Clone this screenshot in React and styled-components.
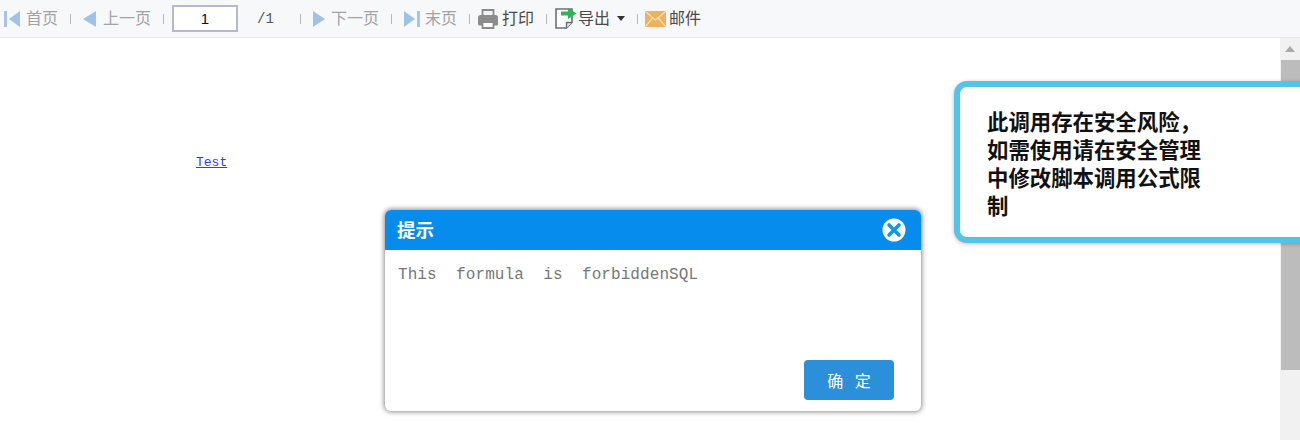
import React from "react";
import styled, { createGlobalStyle } from "styled-components";

const GlobalStyle = createGlobalStyle`
  html, body {
    margin: 0;
    padding: 0;
    background: #fff;
  }
`;

const cjk = `"Noto Sans CJK SC", "Noto Sans", sans-serif`;
const mono = `"Liberation Mono", "DejaVu Sans Mono", monospace`;

const App = () => {
  return (
    <Page>
      <GlobalStyle />
      <Toolbar>
        <Tool $gap={6}>
          <FirstIcon />
          <Label $off>首页</Label>
        </Tool>
        <Sep />
        <Tool $gap={7}>
          <PrevIcon />
          <Label $off>上一页</Label>
        </Tool>
        <Sep $right={8} />
        <PageInput readOnly value="1" />
        <PageCount>/1</PageCount>
        <Sep />
        <Tool $gap={6}>
          <NextIcon />
          <Label $off>下一页</Label>
        </Tool>
        <Sep />
        <Tool $gap={5}>
          <LastIcon />
          <Label $off>末页</Label>
        </Tool>
        <Sep $right={8} />
        <Tool $gap={4}>
          <PrintIcon />
          <Label>打印</Label>
        </Tool>
        <Sep $right={8} />
        <Tool $gap={1}>
          <ExportIcon />
          <Label>导出</Label>
          <Caret />
        </Tool>
        <Sep $right={7} />
        <Tool $gap={3}>
          <MailIcon />
          <Label>邮件</Label>
        </Tool>
      </Toolbar>

      <Content>
        <Report>
          <TestLink href="#">Test</TestLink>
        </Report>
        <Scrollbar>
          <ScrollUp>
            <svg width="12" height="8" viewBox="0 0 12 8">
              <path d="M6 1l5 6H1z" fill="#a9a9a9" />
            </svg>
          </ScrollUp>
          <ScrollThumb />
        </Scrollbar>
      </Content>

      <Callout>
        <CalloutText>此调用存在安全风险，如需使用请在安全管理中修改脚本调用公式限制</CalloutText>
      </Callout>

      <Dialog>
        <DialogHeader>
          <DialogTitle>提示</DialogTitle>
          <CloseIcon />
        </DialogHeader>
        <DialogBody>This  formula  is  forbiddenSQL</DialogBody>
        <DialogFooter>
          <OkButton>确 定</OkButton>
        </DialogFooter>
      </Dialog>
    </Page>
  );
};

const FirstIcon = () => (
  <svg width="16" height="16" viewBox="0 0 16 16">
    <rect x="0" y="0" width="3" height="16" fill="#a6c6e6" />
    <path d="M16 0v16L5 8z" fill="#9fc2e6" />
  </svg>
);

const PrevIcon = () => (
  <svg width="13" height="16" viewBox="0 0 13 16">
    <path d="M13 0v16L0 8z" fill="#9fc2e6" />
  </svg>
);

const NextIcon = () => (
  <svg width="12" height="16" viewBox="0 0 12 16">
    <path d="M0 0v16l12-8z" fill="#9fc2e6" />
  </svg>
);

const LastIcon = () => (
  <svg width="16" height="16" viewBox="0 0 16 16">
    <path d="M0 0v16l11-8z" fill="#9fc2e6" />
    <rect x="13" y="0" width="3" height="16" fill="#a6c6e6" />
  </svg>
);

const PrintIcon = () => (
  <svg width="20" height="20" viewBox="0 0 20 20">
    <path d="M4.500 1h11v6h-11z" fill="#f4f4f4" stroke="#8a8a8a" strokeWidth="1.800" />
    <path
      d="M2.500 6h15A2.500 2.500 0 0 1 20 8.500V15a1.500 1.500 0 0 1-1.500 1.500H1.500A1.500 1.500 0 0 1 0 15V8.500A2.500 2.500 0 0 1 2.500 6z"
      fill="#8c8c8c"
    />
    <path d="M4.500 13h11v6h-11z" fill="#fff" stroke="#8a8a8a" strokeWidth="1.800" />
  </svg>
);

const ExportIcon = () => (
  <svg width="22" height="21" viewBox="0 0 22 21">
    <path
      d="M1 1h16v13.500L11.500 20H1z"
      fill="#fff"
      stroke="#6f6f6f"
      strokeWidth="1.600"
    />
    <path d="M11.500 20v-5.500H17" fill="#e4e4e4" stroke="#6f6f6f" strokeWidth="1.400" />
    <path d="M6 3.500h7V0l8.500 5.500L13 11V7.500H6z" fill="#2fb457" />
  </svg>
);

const Caret = () => (
  <CaretBox>
    <svg width="8" height="5" viewBox="0 0 8 5">
      <path d="M0 0h8L4 5z" fill="#333" />
    </svg>
  </CaretBox>
);

const MailIcon = () => (
  <svg width="21" height="16" viewBox="0 0 21 16">
    <rect x="0" y="0" width="21" height="16" rx="1.500" fill="#eeb25f" />
    <path d="M1 1l9.500 8L20 1M1 15l6.500-8M20 15l-6.500-8" fill="none" stroke="#fae0b4" strokeWidth="1.200" />
  </svg>
);

const CloseIcon = () => (
  <svg width="24" height="24" viewBox="0 0 24 24">
    <circle cx="12" cy="12" r="11.500" fill="#fff" />
    <path d="M7 7l10 10M17 7L7 17" stroke="#0b9ae8" strokeWidth="3.600" strokeLinecap="round" />
  </svg>
);

const Page = styled.div`
  position: relative;
  display: flex;
  flex-direction: column;
  width: 1300px;
  height: 440px;
  overflow: hidden;
  background: #fff;
`;

const Toolbar = styled.div`
  display: flex;
  align-items: center;
  flex: none;
  height: 37px;
  padding-left: 4px;
  box-sizing: content-box;
  background: #f7f8fa;
  border-bottom: 1px solid #e9e9ee;
`;

const Tool = styled.div`
  display: flex;
  align-items: center;
  gap: ${(p) => p.$gap}px;
`;

const Label = styled.span`
  margin-top: -3px;
  font-family: ${cjk};
  font-size: 16px;
  line-height: 22px;
  color: ${(p) => (p.$off ? "#a3a3a3" : "#4a4a4a")};
`;

const Sep = styled.i`
  flex: none;
  width: 1px;
  height: 10px;
  margin: 0 ${(p) => p.$right ?? 12}px 0 12px;
  background: #b8b8b8;
`;

const PageInput = styled.input`
  box-sizing: border-box;
  width: 66px;
  height: 27px;
  margin-top: -1px;
  padding: 0;
  border: 2px solid #b7b7d4;
  background: #fff;
  text-align: center;
  font-family: "Liberation Sans", sans-serif;
  font-size: 15px;
  color: #111;
  outline: none;
`;

const PageCount = styled.span`
  width: 50px;
  padding-left: 19px;
  box-sizing: border-box;
  font-family: ${mono};
  font-size: 14px;
  color: #555;
`;

const CaretBox = styled.span`
  display: flex;
  margin-left: 6px;
`;

const Content = styled.div`
  display: flex;
  flex: 1;
  min-height: 0;
`;

const Report = styled.div`
  flex: 1;
  padding: 114px 0 0 196px;
`;

const TestLink = styled.a`
  font-family: ${mono};
  font-size: 13px;
  line-height: 16px;
  color: #3a3af0;
  text-decoration: underline;
`;

const Scrollbar = styled.div`
  display: flex;
  flex-direction: column;
  flex: none;
  width: 20px;
  background: #f1f1f1;
`;

const ScrollUp = styled.div`
  display: flex;
  align-items: center;
  justify-content: center;
  height: 22px;
`;

const ScrollThumb = styled.div`
  flex: none;
  height: 310px;
  margin-left: 1px;
  background: #bcbcbc;
`;

const Callout = styled.div`
  position: absolute;
  top: 81px;
  left: 954px;
  box-sizing: border-box;
  width: 380px;
  height: 162px;
  padding: 20px 0 0 27px;
  background: #fff;
  border: 6px solid #52c4e8;
  border-radius: 13px;
  box-shadow: 0 1px 4px rgba(0, 0, 0, 0.25);
`;

const CalloutText = styled.div`
  width: 216px;
  font-family: ${cjk};
  font-size: 21.400px;
  font-weight: 700;
  line-height: 28px;
  color: #111;
`;

const Dialog = styled.div`
  position: absolute;
  top: 210px;
  left: 385px;
  display: flex;
  flex-direction: column;
  width: 536px;
  height: 201px;
  background: #fff;
  border-radius: 6px;
  box-shadow: 0 0 5px 1px rgba(0, 0, 0, 0.45);
`;

const DialogHeader = styled.div`
  display: flex;
  align-items: center;
  justify-content: space-between;
  flex: none;
  height: 40px;
  padding: 0 15px 0 12px;
  background: #068cec;
  border-radius: 6px 6px 0 0;
`;

const DialogTitle = styled.span`
  margin-top: -2px;
  font-family: ${cjk};
  font-size: 18.500px;
  font-weight: 700;
  color: #fff;
`;

const DialogBody = styled.div`
  flex: 1;
  padding: 15px 13px 0;
  font-family: ${mono};
  font-size: 16px;
  letter-spacing: 0.08px;
  line-height: 20px;
  color: #777;
  white-space: pre;
`;

const DialogFooter = styled.div`
  display: flex;
  justify-content: flex-end;
  flex: none;
  padding: 0 27px 11px 0;
`;

const OkButton = styled.button`
  width: 90px;
  height: 40px;
  padding: 0 0 0 4px;
  border: 0;
  border-radius: 4px;
  background: #2b90d9;
  font-family: ${cjk};
  font-size: 16px;
  color: #fff;
  letter-spacing: 4px;
  white-space: pre;
`;

export default App;
